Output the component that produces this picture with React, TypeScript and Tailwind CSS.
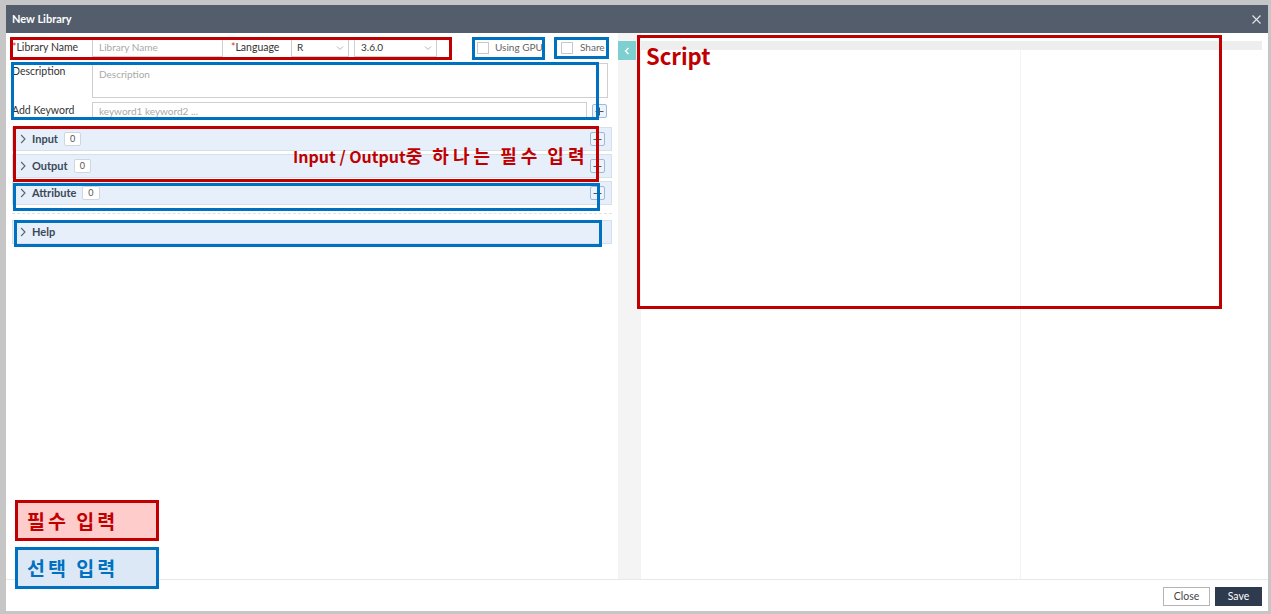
import React from "react";

const Chevron = ({ dir = "right", color = "#666", size = 8 }: { dir?: string; color?: string; size?: number }) => (
  <svg width={size} height={size} viewBox="0 0 8 8" fill="none">
    {dir === "right" && <polyline points="2.5,0.8 5.6,4 2.5,7.2" stroke={color} strokeWidth="0.9" />}
    {dir === "left" && <polyline points="5.5,1 2.5,4 5.5,7" stroke={color} strokeWidth="1.4" />}
    {dir === "down" && <polyline points="1,2.5 4,5.5 7,2.5" stroke={color} strokeWidth="0.9" />}
  </svg>
);

const PlusBtn = () => (
  <div className="w-[15px] h-[14px] border border-[#9dbad8] rounded-[2px] bg-[#edf3fa] flex items-center justify-center">
    <svg width="9" height="9" viewBox="0 0 9 9">
      <line x1="0.5" y1="4.5" x2="8.5" y2="4.5" stroke="#4a5560" strokeWidth="1" />
      <line x1="4.5" y1="0.5" x2="4.5" y2="8.5" stroke="#4a5560" strokeWidth="1" />
    </svg>
  </div>
);

const Section = ({ label, badge, plus }: { label: string; badge?: boolean; plus?: boolean }) => (
  <div className="h-[24px] border border-[#d5e0eb] bg-[#e7f0fa] flex items-center pl-[5px] pr-[6px]">
    <Chevron dir="right" color="#5a6470" size={10} />
    <span className="ml-[4px] text-[11px] font-bold text-[#3b4858]">{label}</span>
    {badge && (
      <span className="ml-[6px] h-[14px] px-[5px] bg-white border border-[#cfd6de] rounded-[2px] text-[9px] text-[#555] flex items-center">0</span>
    )}
    {plus && (
      <div className="ml-auto">
        <PlusBtn />
      </div>
    )}
  </div>
);

export default function App() {
  return (
    <div className="relative w-[1271px] h-[614px] bg-[#c6c6c6] pl-[6px] pt-[5px] pr-[3px] pb-[3px] overflow-hidden font-[family-name:Lato,'Noto_Sans',sans-serif]">
      <div className="flex flex-col h-full bg-white">
        {/* header */}
        <div className="h-[28px] bg-[#545d6c] flex items-center justify-between pl-[6px] pr-[7px]">
          <span className="text-[11px] font-bold text-white">New Library</span>
          <svg width="9" height="9" viewBox="0 0 9 9">
            <line x1="0.5" y1="0.5" x2="8.5" y2="8.5" stroke="#e6e8ec" strokeWidth="1.1" />
            <line x1="8.5" y1="0.5" x2="0.5" y2="8.5" stroke="#e6e8ec" strokeWidth="1.1" />
          </svg>
        </div>

        {/* body */}
        <div className="flex h-[546px]">
          {/* left panel */}
          <div className="w-[612px] pl-[6px] pr-[6px] pt-[5px] flex flex-col text-[10.5px] text-[#333]">
            <div className="flex items-center h-[19px]">
              <span className="w-[80px] whitespace-nowrap">
                <span className="text-[#d33]">*</span>Library Name
              </span>
              <div className="w-[131px] h-[18px] border border-[#cfcfcf] px-[6px] text-[10px] text-[#a9a9a9] flex items-center">Library Name</div>
              <span className="ml-[8px] w-[60px] whitespace-nowrap">
                <span className="text-[#d33]">*</span>Language
              </span>
              <div className="w-[58px] h-[19px] border border-[#cfcfcf] pl-[5px] pr-[4px] text-[10px] flex items-center justify-between">
                <span>R</span>
                <Chevron dir="down" color="#aaa" />
              </div>
              <div className="ml-[5px] w-[83px] h-[19px] border border-[#cfcfcf] pl-[6px] pr-[4px] text-[10px] flex items-center justify-between">
                <span>3.6.0</span>
                <Chevron dir="down" color="#aaa" />
              </div>
              <div className="ml-[40px] w-[64px] flex items-center whitespace-nowrap">
                <div className="w-[12px] h-[12px] shrink-0 border border-[#c8c8c8] bg-white" />
                <span className="ml-[6px] text-[10px] text-[#666]">Using GPU</span>
              </div>
              <div className="ml-[20px] flex items-center whitespace-nowrap">
                <div className="w-[12px] h-[12px] shrink-0 border border-[#c8c8c8] bg-white" />
                <span className="ml-[7px] text-[10px] text-[#666]">Share</span>
              </div>
            </div>

            <div className="mt-[6px] flex">
              <span className="w-[80px] pt-[1px]">Description</span>
              <div className="w-[516px] h-[35px] border border-[#cfcfcf] px-[6px] pt-[3px] text-[10px] text-[#a9a9a9]">Description</div>
            </div>

            <div className="mt-[4px] flex items-center">
              <span className="w-[80px]">Add Keyword</span>
              <div className="w-[495px] h-[18px] border border-[#cfcfcf] px-[6px] text-[10px] text-[#a9a9a9] flex items-center">keyword1 keyword2 ...</div>
              <div className="ml-[5px]">
                <PlusBtn />
              </div>
            </div>

            <div className="mt-[7px] flex flex-col gap-[3px]">
              <Section label="Input" badge plus />
              <Section label="Output" badge plus />
              <Section label="Attribute" badge plus />
            </div>
            <div className="mt-[8px] border-t border-dashed border-[#e2e2e2]" />
            <div className="mt-[6px]">
              <Section label="Help" />
            </div>
          </div>

          {/* splitter */}
          <div className="w-[23px] bg-[#f4f4f4] pt-[8px]">
            <div className="w-[18px] h-[19px] bg-[#7ecfd0] flex items-center justify-center">
              <Chevron dir="left" color="#ffffff" />
            </div>
          </div>

          {/* right panel */}
          <div className="flex-1 pt-[8px] pr-[6px] flex flex-col">
            <div className="h-[9px] bg-[#eeeeee]" />
            <div className="flex-1 flex">
              <div className="w-[379px]" />
              <div className="flex-1 border-l border-[#f3f3f3]" />
            </div>
          </div>
        </div>

        {/* footer */}
        <div className="h-[32px] border-t border-[#e8e8e8] flex justify-end items-start pt-[7px] pr-[6px] gap-[5px]">
          <button className="w-[47px] h-[19px] border border-[#b5b5b5] bg-white text-[10.5px] text-[#444] flex items-center justify-center">Close</button>
          <button className="w-[47px] h-[19px] bg-[#2e3a4e] text-[10.5px] text-white flex items-center justify-center">Save</button>
        </div>
      </div>

      {/* annotations */}
      <div className="absolute left-[10px] top-[37px] w-[442px] h-[23px] border-[3px] border-[#c00000]" />
      <div className="absolute left-[472px] top-[37px] w-[73px] h-[23px] border-[3px] border-[#0070c0]" />
      <div className="absolute left-[554px] top-[37px] w-[55px] h-[22px] border-[3px] border-[#0070c0]" />
      <div className="absolute left-[11px] top-[62px] w-[588px] h-[58px] border-[3px] border-[#0070c0]" />
      <div className="absolute left-[13px] top-[126px] w-[586px] h-[56px] border-[3px] border-[#c00000]" />
      <div className="absolute left-[13px] top-[183px] w-[587px] h-[28px] border-[3px] border-[#0070c0]" />
      <div className="absolute left-[14px] top-[220px] w-[588px] h-[27px] border-[3px] border-[#0070c0]" />
      <div className="absolute left-[637px] top-[35px] w-[585px] h-[274px] border-[3px] border-[#c00000]" />

      <div className="absolute left-[293px] top-[142px] text-[16px] leading-[26px] font-bold text-[#c00000] font-[family-name:'Noto_Sans_CJK_KR',sans-serif] whitespace-nowrap">
        Input / Output
        <span className="text-[18px] tracking-[4px] [word-spacing:-2px]">중 하나는 필수 입력</span>
      </div>
      <div className="absolute left-[646px] top-[40px] text-[22px] leading-[30px] font-bold text-[#c00000] font-[family-name:'Noto_Sans_CJK_KR',sans-serif]">
        Script
      </div>

      <div className="absolute left-[15px] top-[500px] w-[144px] h-[41px] border-[3px] border-[#c00000] bg-[#ffcccc] flex items-center pl-[9px]">
        <span className="text-[19.5px] font-bold text-[#c00000] font-[family-name:'Noto_Sans_CJK_KR',sans-serif] tracking-[3px] whitespace-nowrap">필수 입력</span>
      </div>
      <div className="absolute left-[15px] top-[547px] w-[144px] h-[42px] border-[3px] border-[#0070c0] bg-[#dce8f5] flex items-center pl-[9px]">
        <span className="text-[19.5px] font-bold text-[#0070c0] font-[family-name:'Noto_Sans_CJK_KR',sans-serif] tracking-[3px] whitespace-nowrap">선택 입력</span>
      </div>
    </div>
  );
}
